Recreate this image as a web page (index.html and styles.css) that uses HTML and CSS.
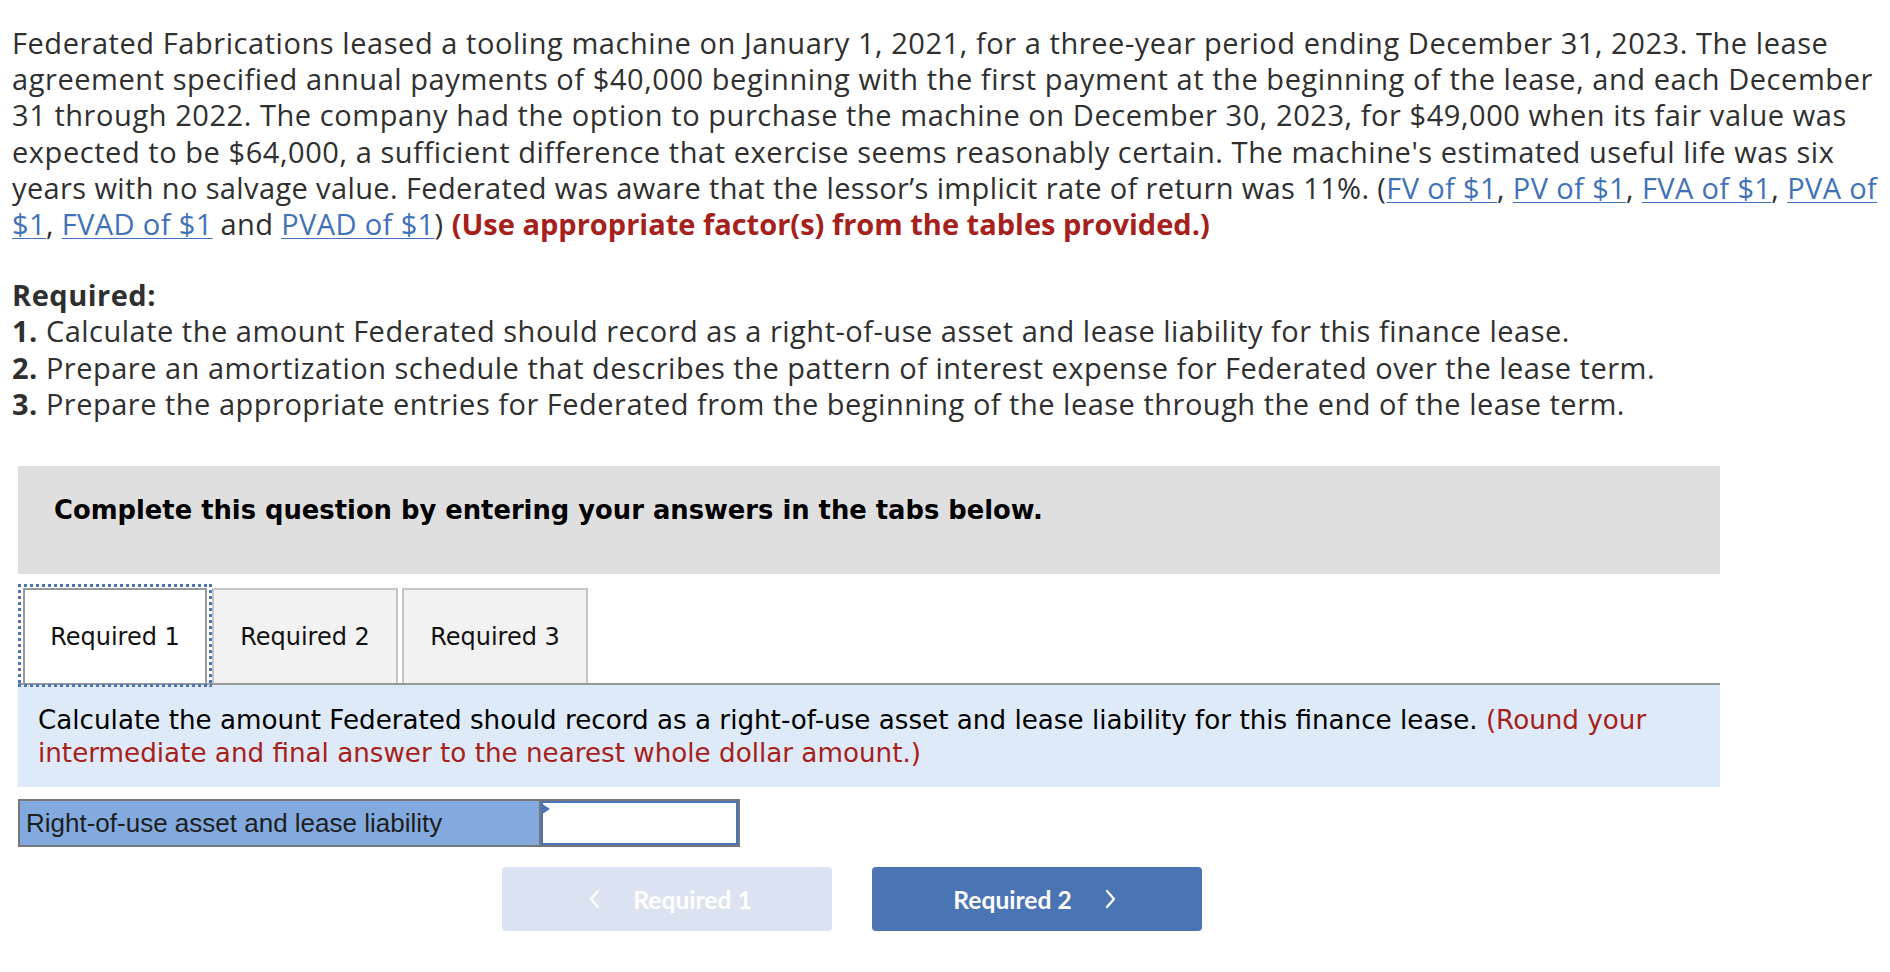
FILE: index.html
```html
<!DOCTYPE html>
<html>
<head>
<meta charset="utf-8">
<link rel="stylesheet" href="styles.css">
</head>
<body>
<div class="page">
  <p class="intro">Federated Fabrications leased a tooling machine on January 1, 2021, for a three-year period ending December 31, 2023. The lease<br>agreement specified annual payments of $40,000 beginning with the first payment at the beginning of the lease, and each December<br>31 through 2022. The company had the option to purchase the machine on December 30, 2023, for $49,000 when its fair value was<br>expected to be $64,000, a sufficient difference that exercise seems reasonably certain. The machine's estimated useful life was six<br><span class="tight">years with no salvage value. Federated was aware that the lessor’s implicit rate of return was 11%. (<a href="#">FV of $1</a>, <a href="#">PV of $1</a>, <a href="#">FVA of $1</a>, <a href="#">PVA of<br>$1</a>, <a href="#">FVAD of $1</a> and <a href="#">PVAD of $1</a>)</span> <strong class="red">(Use appropriate factor(s) from the tables provided.)</strong></p>

  <div class="required">
    <div class="req-title">Required:</div>
    <div><b>1.</b> Calculate the amount Federated should record as a right-of-use asset and lease liability for this finance lease.</div>
    <div><b>2.</b> Prepare an amortization schedule that describes the pattern of interest expense for Federated over the lease term.</div>
    <div><b>3.</b> Prepare the appropriate entries for Federated from the beginning of the lease through the end of the lease term.</div>
  </div>

  <div class="widget">
    <div class="banner">Complete this question by entering your answers in the tabs below.</div>

    <div class="tabs">
      <div class="tab active">Required 1</div>
      <div class="tab">Required 2</div>
      <div class="tab">Required 3</div>
    </div>

    <div class="instructions">Calculate the amount Federated should record as a right-of-use asset and lease liability for this finance lease. <span class="red-note">(Round your<br>intermediate and final answer to the nearest whole dollar amount.)</span></div>

    <div class="answer-row">
      <div class="answer-label">Right-of-use asset and lease liability</div>
      <div class="answer-input"><span class="flag"></span></div>
    </div>

    <div class="nav">
      <button class="nav-btn prev">
        <svg class="chev" width="12" height="20" viewBox="0 0 12 20"><path d="M10 2 L3 10 L10 18" fill="none" stroke="#fff" stroke-width="2.4" stroke-linecap="round" stroke-linejoin="round"/></svg>
        <span>Required 1</span>
      </button>
      <button class="nav-btn next">
        <span>Required 2</span>
        <svg class="chev" width="12" height="20" viewBox="0 0 12 20"><path d="M2 2 L9 10 L2 18" fill="none" stroke="#fff" stroke-width="2.4" stroke-linecap="round" stroke-linejoin="round"/></svg>
      </button>
    </div>
  </div>
</div>
</body>
</html>
```

FILE: styles.css
```css
html, body {
  margin: 0;
  padding: 0;
  background: #fff;
}

.page {
  padding: 25px 12px 20px 12px;
  font-family: "Open Sans", Lato, sans-serif;
  color: #2f2f2f;
}

.intro {
  margin: 0;
  font-size: 29px;
  letter-spacing: 0.56px;
  line-height: 36.2px;
  white-space: nowrap;
}

.intro .tight {
  letter-spacing: 0.38px;
}

.intro a {
  color: #3f72b9;
  text-decoration: underline;
  text-underline-offset: 3px;
  text-decoration-thickness: 1px;
}

.red {
  color: #a6211b;
  font-weight: 700;
  letter-spacing: 0;
}

.required {
  margin-top: 35px;
  font-size: 29px;
  letter-spacing: 0.5px;
  line-height: 36.2px;
  white-space: nowrap;
}

.req-title {
  font-weight: 700;
}

.required b {
  font-weight: 700;
}

.widget {
  margin-top: 44px;
  margin-left: 6px;
  width: 1702px;
  font-family: "DejaVu Sans", Verdana, sans-serif;
}

.banner {
  background: #dfdfdf;
  height: 108px;
  box-sizing: border-box;
  padding: 28px 0 0 36px;
  font-size: 25.8px;
  line-height: 32px;
  font-weight: 700;
  color: #000;
}

.tabs {
  display: flex;
  margin-top: 14px;
  padding-left: 5px;
  gap: 4px;
  height: 95px;
}

.tab {
  width: 186px;
  box-sizing: border-box;
  border: 2px solid #c6c6c6;
  border-bottom: none;
  background: #f2f2f2;
  display: flex;
  align-items: center;
  justify-content: center;
  font-size: 24px;
  color: #111;
}

.tab.active {
  position: relative;
  width: 184px;
  margin-right: 1px;
  background: #fff;
  border-color: #999;
}

.tab.active::after {
  content: "";
  position: absolute;
  left: -7px;
  top: -6px;
  right: -7px;
  bottom: -4px;
  background:
    repeating-linear-gradient(90deg, #4a76b8 0 3px, transparent 3px 6px) top left / 100% 3px no-repeat,
    repeating-linear-gradient(90deg, #4a76b8 0 3px, transparent 3px 6px) bottom left / 100% 3px no-repeat,
    repeating-linear-gradient(180deg, #4a76b8 0 3px, transparent 3px 6px) top left / 3px 100% no-repeat,
    repeating-linear-gradient(180deg, #4a76b8 0 3px, transparent 3px 6px) top right / 3px 100% no-repeat;
}

.instructions {
  background: #deeaf7;
  border-top: 2px solid #999;
  padding: 19px 20px 18px 20px;
  font-size: 26.2px;
  line-height: 32.5px;
  color: #000;
  white-space: nowrap;
}

.red-note {
  color: #a6211b;
}

.answer-row {
  margin-top: 12px;
  display: flex;
  width: 722px;
  height: 48px;
  box-sizing: border-box;
  border: 2px solid #777;
}

.answer-label {
  width: 521px;
  background: #82aadf;
  border-right: 2px solid #777;
  display: flex;
  align-items: center;
  padding-left: 6px;
  box-sizing: border-box;
  font-family: "Liberation Sans", Arial, sans-serif;
  font-size: 26px;
  color: #1e1e1e;
}

.answer-input {
  flex: 1;
  position: relative;
  background: #fff;
  border: 2px solid #4a74b5;
}

.flag {
  position: absolute;
  left: -2px;
  top: -2px;
  width: 0;
  height: 0;
  border-top: 6px solid transparent;
  border-bottom: 6px solid transparent;
  border-left: 9px solid #4a74b5;
  margin-top: 2px;
}

.nav {
  display: flex;
  gap: 40px;
  margin-top: 20px;
  padding-left: 484px;
}

.nav-btn {
  width: 330px;
  height: 64px;
  border: none;
  border-radius: 4px;
  display: flex;
  align-items: center;
  justify-content: center;
  gap: 33px;
  font-family: Lato, "Open Sans", sans-serif;
  font-weight: 700;
  font-size: 24.6px;
  color: #fff;
  padding: 0;
}

.nav-btn.prev {
  background: #dae3ef;
  padding-left: 6px;
}

.nav-btn.next {
  background: #4a74b3;
  padding-right: 4px;
}

.chev {
  display: block;
}
```
